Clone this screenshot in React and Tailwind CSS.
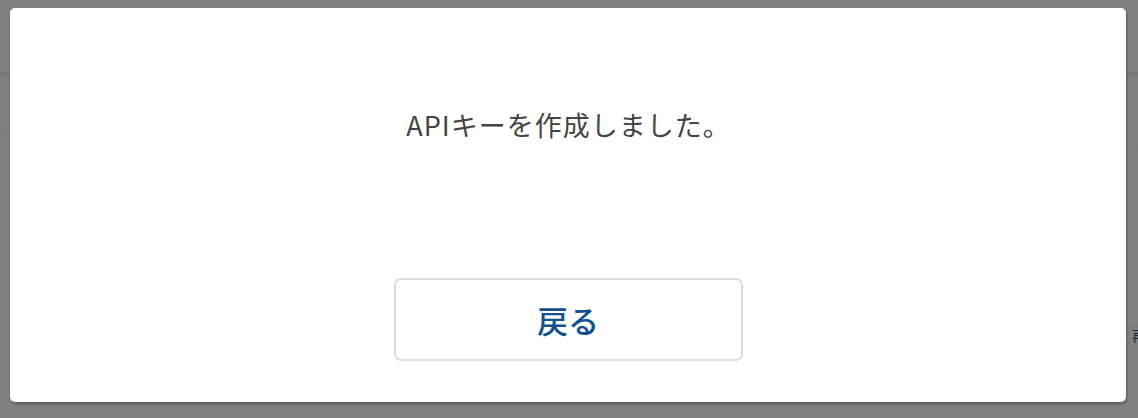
import React from "react";

export default function App() {
  const font = { fontFamily: '"Noto Sans CJK JP", "Noto Sans", sans-serif' };
  return (
    <div className="relative w-[1138px] h-[418px] overflow-hidden bg-[#808080]" style={font}>
      {/* dimmed page behind overlay */}
      <div className="flex flex-col">
        <div className="h-[72px]" />
        <div className="h-[5px] bg-[#787878]" />
        <div className="h-[58px]" />
        <div className="h-px bg-[#777777] w-[20px]" />
        <div className="h-[8px]" />
        <div className="h-px bg-[#777777] ml-auto w-[20px]" />
        <div className="h-[181px]" />
        <div className="h-px bg-[#777777] ml-auto w-[20px]" />
        <div className="h-[10px] flex justify-end">
          <span className="text-[14px] leading-[14px] text-[#14243c] mr-[-8px] mt-[1px]">再</span>
        </div>
        <div className="h-[36px]" />
        <div className="h-px bg-[#777777] ml-auto w-[20px]" />
      </div>

      {/* modal */}
      <div className="absolute left-[10px] top-[8px] w-[1116px] h-[394px] bg-white rounded-[5px] shadow-[1px_2px_3px_rgba(0,0,0,0.3)] flex flex-col items-center">
        <p className="mt-[99px] text-[27px] leading-[36px] text-[#444444] tracking-[1px] pl-[1px]">
          APIキーを作成しました。
        </p>
        <button className="mt-[135px] w-[349px] h-[83px] border-2 border-[#dddddd] rounded-[7px] bg-white flex items-center justify-center text-[31px] leading-none text-[#14508c] font-medium">
          戻る
        </button>
      </div>
    </div>
  );
}
